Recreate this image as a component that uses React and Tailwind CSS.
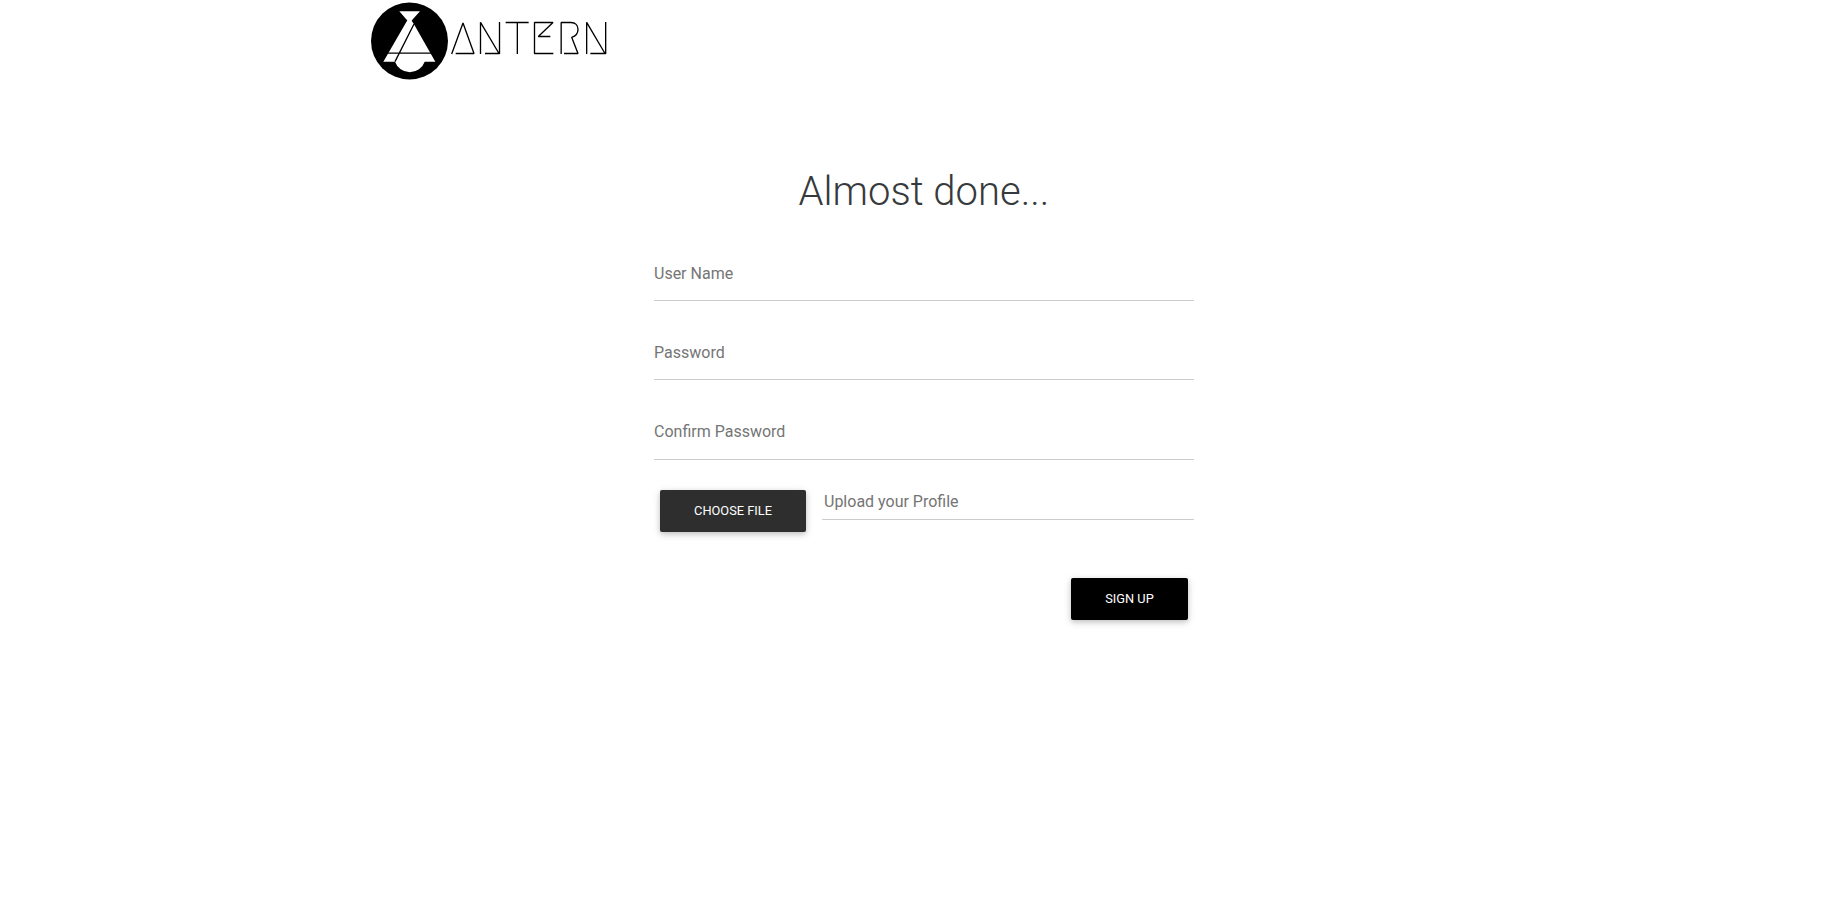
function Logo() {
  return (
    <svg viewBox="0 0 744 252" width="248" height="84" role="img" aria-label="Lantern" className="block">
      <circle cx="130.5" cy="123" r="115.5" fill="#000" />
      <path d="M100 34H162L141 57L137 62L144 73L208 185H176A47 47 0 0 1 87 185H52L124 61L120 57Z" fill="#fff" />
      <path d="M144 72L87 185M66 159.500H195" fill="none" stroke="#000" strokeWidth="4" />
      <g transform="translate(233 30)" fill="none" stroke="#000" strokeWidth="4" strokeLinejoin="bevel">
        <path d="M24 132L58 39L91 130.500H36" />
        <path d="M110.500 132V37L166 130.500M167.500 36V132M168 130.500H124" />
        <path d="M186 37.500H255M221 37V132" />
        <path d="M320 79.500H284L328 37.500H272.500V130.500H329" />
        <path d="M352.500 132V37.500H382C395 37.500 403 46 403 58C403 70 396 79 384 82L403 130.500H361" />
        <path d="M429 132V37L484 130.500M486 36V132M486 130.500H440" />
      </g>
    </svg>
  );
}

function Field({ label, type = "text", className = "h-[55px]" }) {
  return (
    <input
      type={type}
      placeholder={label}
      className={`block w-full border-b border-[#ccc] bg-transparent text-base text-[#495057] outline-none placeholder:text-[#757575] ${className}`}
    />
  );
}

const button =
  "h-[42px] rounded-[2px] pb-px text-[12.8px] leading-[19px] uppercase text-white shadow-[0_2px_5px_0_rgba(0,0,0,0.16),0_2px_10px_0_rgba(0,0,0,0.12)]";

export default function App() {
  return (
    <div className="min-h-screen bg-white font-['Roboto',sans-serif]">
      <header className="h-[84px] pl-[366px]">
        <Logo />
      </header>
      <main className="mx-auto w-[540px] pt-[84px]">
        <h1 className="text-center text-[40px] leading-[48px] font-light text-[#373a3c]">Almost done...</h1>
        <form className="pt-[30px]">
          <div className="flex flex-col gap-6">
            <Field label="User Name" />
            <Field label="Password" type="password" />
            <Field label="Confirm Password" type="password" className="h-14 pb-px" />
          </div>
          <div className="mt-[30px] flex items-start pl-1.5">
            <button type="button" className={`${button} w-[146px] bg-[#2e2e2e]`}>
              Choose file
            </button>
            <input
              type="text"
              placeholder="Upload your Profile"
              className="ml-4 h-[30px] min-w-0 flex-1 border-b border-[#ccc] pb-[6px] pl-0.5 text-base outline-none placeholder:text-[#757575]"
            />
          </div>
          <div className="mt-[46px] flex justify-end pr-1.5">
            <button type="button" className={`${button} w-[117px] bg-black`}>
              Sign up
            </button>
          </div>
        </form>
      </main>
    </div>
  );
}
